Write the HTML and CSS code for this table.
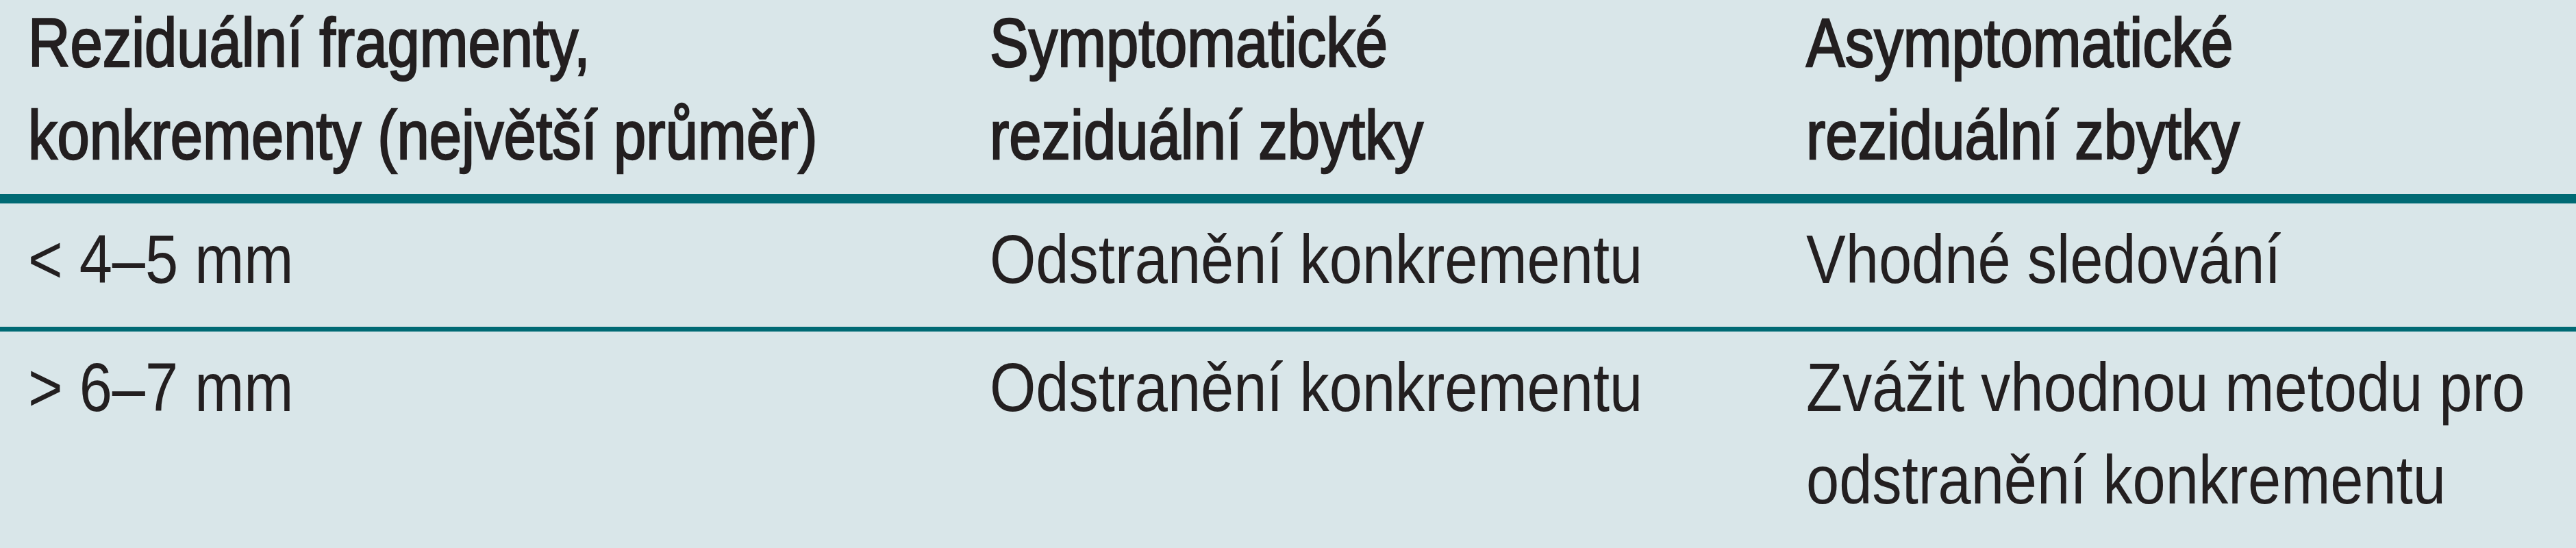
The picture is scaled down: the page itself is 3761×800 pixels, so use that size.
FILE: index.html
```
<!DOCTYPE html>
<html lang="cs">
<head>
<meta charset="utf-8">
<title>Reziduální fragmenty</title>
<link rel="stylesheet" href="styles.css">
</head>
<body>
<div class="table">
  <div class="row head">
    <div class="cell"><span class="t">Reziduální fragmenty,<br>konkrementy (největší průměr)</span></div>
    <div class="cell"><span class="t">Symptomatické<br>reziduální zbytky</span></div>
    <div class="cell"><span class="t">Asymptomatické<br>reziduální zbytky</span></div>
  </div>
  <div class="row body first">
    <div class="cell"><span class="t">&lt; 4–5 mm</span></div>
    <div class="cell"><span class="t">Odstranění konkrementu</span></div>
    <div class="cell"><span class="t">Vhodné sledování</span></div>
  </div>
  <div class="row body">
    <div class="cell"><span class="t">&gt; 6–7 mm</span></div>
    <div class="cell"><span class="t">Odstranění konkrementu</span></div>
    <div class="cell"><span class="t">Zvážit vhodnou metodu pro<br>odstranění konkrementu</span></div>
  </div>
</div>
</body>
</html>
```
FILE: styles.css
```
html, body {
  margin: 0;
  padding: 0;
  background: #d9e6e9;
}
body {
  width: 3761px;
  height: 800px;
  overflow: hidden;
  font-family: "Liberation Sans", Arial, sans-serif;
  color: #231f20;
}
.table {
  margin-top: -5px;
}
.row {
  display: grid;
  grid-template-columns: 1404px 1192px 1fr;
  font-size: 100px;
  line-height: 135px;
}
.cell {
  padding-left: 41px;
  white-space: nowrap;
  min-width: 0;
}
.t {
  display: inline-block;
  transform-origin: 0 0;
}
.head {
  padding-bottom: 18px;
  border-bottom: 14px solid #006a74;
  font-weight: 400;
  -webkit-text-stroke: 2.5px #231f20;
}
.head .t {
  transform: scaleX(0.85);
}
.body {
  padding-top: 14px;
  padding-bottom: 31px;
}
.body .t {
  transform: scaleX(0.866);
}
.body.first {
  border-bottom: 7px solid #006a74;
}
```
